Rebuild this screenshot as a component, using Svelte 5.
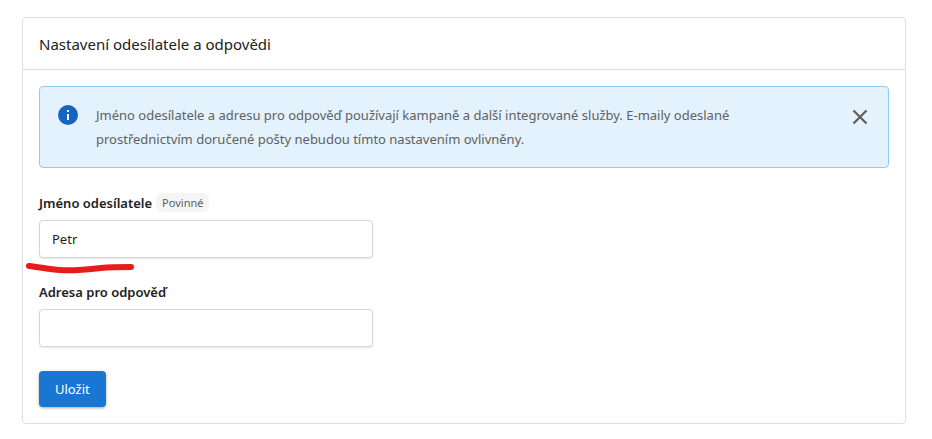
<script>
  let senderName = $state('Petr');
  let replyAddress = $state('');
  let showInfo = $state(true);
</script>

<main>
  <section class="card">
    <header>
      <h1>Nastavení odesílatele a odpovědi</h1>
    </header>
    <form class="body" onsubmit={(e) => e.preventDefault()}>
      {#if showInfo}
        <div class="info" role="status">
          <svg class="icon" viewBox="0 0 24 24" aria-hidden="true">
            <circle cx="12" cy="12" r="10" fill="#1565c0" />
            <path d="M11 7h2v2h-2zM11 11h2v6h-2z" fill="#fff" />
          </svg>
          <p>
            Jméno odesílatele a adresu pro odpověď používají kampaně a další integrované služby. E-maily odeslané
            prostřednictvím doručené pošty nebudou tímto nastavením ovlivněny.
          </p>
          <button type="button" class="close" aria-label="Zavřít" onclick={() => (showInfo = false)}>
            <svg class="icon" viewBox="0 0 24 24" aria-hidden="true">
              <path d="M5.500 5.500l13 13M18.500 5.500l-13 13" stroke="#616161" stroke-width="2.300" fill="none" />
            </svg>
          </button>
        </div>
      {/if}

      <div class="field marked">
        <div class="label-row">
          <label for="sender">Jméno odesílatele</label>
          <span class="badge">Povinné</span>
        </div>
        <input id="sender" type="text" required bind:value={senderName} />
        <svg class="stroke" viewBox="0 0 110 12" aria-hidden="true">
          <path
            d="M3 4C14 5 24 8 38 8.300C52 8.600 62 7.500 75 6C85 5 94 5 105 5"
            fill="none"
            stroke="#e81c1c"
            stroke-width="6"
            stroke-linecap="round"
          />
        </svg>
      </div>

      <div class="field">
        <div class="label-row">
          <label for="reply">Adresa pro odpověď</label>
        </div>
        <input id="reply" type="email" bind:value={replyAddress} />
      </div>

      <button type="submit" class="save">Uložit</button>
    </form>
  </section>
</main>

<style>
  :global(body) {
    background: #fff;
  }

  main {
    padding: 17px 26px 15px 22px;
    font-family: 'Segoe UI', 'Noto Sans', 'Open Sans', sans-serif;
    font-size: 13px;
    color: #212121;
  }

  .card {
    border: 1px solid #dedede;
    border-radius: 4px;
    background: #fff;
  }

  header {
    padding: 14px 16px 13px;
    border-bottom: 1px solid #dedede;
  }

  h1 {
    margin: 0;
    font-size: 15px;
    line-height: 24px;
    font-weight: 400;
  }

  .body {
    display: flex;
    flex-direction: column;
    align-items: flex-start;
    gap: 24px;
    padding: 16px;
  }

  .info {
    display: flex;
    align-items: flex-start;
    gap: 16px;
    box-sizing: border-box;
    width: 100%;
    margin-bottom: 1px;
    padding: 16px;
    border: 1px solid #90caf9;
    border-radius: 4px;
    background: #e3f2fd;
    color: #616161;
  }

  .info p {
    flex: 1;
    margin: 0;
    padding-right: 16px;
    line-height: 24px;
  }

  .icon {
    display: block;
    flex: none;
    width: 24px;
    height: 24px;
  }

  .close {
    margin: 2px 0 0;
    padding: 0;
    border: 0;
    background: none;
    cursor: pointer;
  }

  .field {
    display: flex;
    flex-direction: column;
    gap: 8px;
    width: 334px;
    max-width: 100%;
  }

  .marked {
    position: relative;
  }

  .stroke {
    position: absolute;
    left: -13px;
    bottom: -16px;
    width: 110px;
    height: 12px;
    pointer-events: none;
  }

  .label-row {
    display: flex;
    align-items: center;
    gap: 4px;
    height: 19px;
  }

  label {
    font-weight: 600;
  }

  .badge {
    padding: 0 6px;
    border-radius: 6px;
    background: #f5f5f5;
    color: #616161;
    font-size: 11px;
    line-height: 19px;
  }

  input {
    box-sizing: border-box;
    width: 100%;
    height: 38px;
    padding: 0 12px;
    border: 1px solid #d6d6d6;
    border-radius: 4px;
    background: #fff;
    box-shadow: 0 1px 2px rgba(0, 0, 0, 0.1);
    color: inherit;
    font: inherit;
  }

  .save {
    height: 36px;
    padding: 0 16px;
    border: 0;
    border-radius: 4px;
    background: #1976d2;
    box-shadow: 0 1px 3px rgba(0, 0, 0, 0.35);
    color: #fff;
    font: inherit;
    font-size: 13px;
    cursor: pointer;
  }
</style>
